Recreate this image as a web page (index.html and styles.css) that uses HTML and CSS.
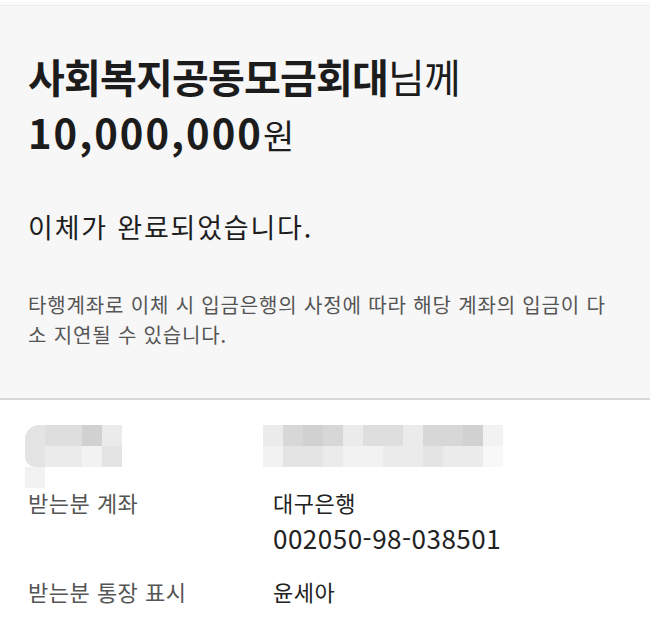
FILE: index.html
```html
<!DOCTYPE html>
<html lang="ko">
<head>
<meta charset="utf-8">
<title>이체 완료</title>
<link rel="stylesheet" href="styles.css">
</head>
<body>
<div class="screen">
  <div class="topbar"></div>
  <section class="summary">
    <h1 class="title">
      <span class="line"><b>사회복지공동모금회대</b>님께</span>
      <span class="line amount"><b class="num">10,000,000</b><span class="won">원</span></span>
    </h1>
    <p class="done">이체가 완료되었습니다.</p>
    <p class="notice">타행계좌로 이체 시 입금은행의 사정에 따라 해당 계좌의 입금이 다소 지연될 수 있습니다.</p>
  </section>
  <section class="details">
    <div class="row">
      <div class="mosaic mosaic-left">
        <i class="g2 rl"></i><i class="g3 w2"></i><i class="g5"></i><i class="g1"></i>
        <i class="g2 rl2"></i><i class="g1"></i><i class="g0"></i><i class="g2"></i><i class="g0"></i>
      </div>
      <div class="mosaic mosaic-right">
        <i class="g1"></i><i class="g4"></i><i class="g5"></i><i class="g4"></i><i class="g1"></i><i class="g3"></i><i class="g3"></i><i class="g1"></i><i class="g4"></i><i class="g4"></i><i class="g5"></i><i class="g0"></i>
        <i class="g0"></i><i class="g2"></i><i class="g2"></i><i class="g1"></i><i class="g0"></i><i class="g0"></i><i class="g1"></i><i class="g1"></i><i class="g2"></i><i class="g1"></i><i class="g1"></i><i class="gx"></i>
      </div>
    </div>
    <div class="row">
      <div class="label">받는분 계좌</div>
      <div class="value">
        <div>대구은행</div>
        <div class="acct">002050-98-038501</div>
      </div>
    </div>
    <div class="row">
      <div class="label">받는분 통장 표시</div>
      <div class="value">윤세아</div>
    </div>
  </section>
</div>
</body>
</html>
```

FILE: styles.css
```css
* { box-sizing: border-box; }

html, body {
  margin: 0;
  padding: 0;
  background: #ffffff;
}

body {
  font-family: "Noto Sans CJK KR", "Noto Sans", sans-serif;
  color: #222222;
}

.screen {
  width: 650px;
  height: 630px;
  overflow: hidden;
}

.topbar {
  height: 6px;
  background: #fbfbfb;
  border-top: 2px solid #ffffff;
  border-bottom: 1px solid #ececec;
}

.summary {
  background: #f7f7f7;
  padding: 42px 28px 0;
  height: 394px;
  border-bottom: 2px solid #d9d9d9;
}

.title {
  margin: 0;
  font-size: 40px;
  line-height: 56px;
  font-weight: 400;
  color: #1c1c1c;
}

.title .line {
  display: block;
  letter-spacing: -0.8px;
}

.title b {
  font-weight: 700;
}

.title .amount {
  letter-spacing: 0;
}

.title .num {
  letter-spacing: 2px;
}

.title .won {
  font-size: 34px;
}

.done {
  margin: 46px 0 0;
  font-size: 27px;
  line-height: 36px;
  letter-spacing: 1.8px;
  color: #1e1e1e;
}

.notice {
  margin: 45px 0 0;
  width: 588px;
  font-size: 20px;
  line-height: 30px;
  letter-spacing: 0.85px;
  word-break: break-all;
  color: #555555;
}

.details {
  padding: 25px 28px 0;
}

.row {
  display: grid;
  grid-template-columns: 245px 1fr;
  font-size: 22px;
  line-height: 36px;
  letter-spacing: 0.5px;
}

.row + .row {
  margin-top: 17px;
}

.label {
  color: #555555;
}

.value {
  color: #222222;
}

.acct {
  font-size: 26px;
  letter-spacing: 0.5px;
}

.mosaic {
  display: grid;
  grid-auto-rows: 21px;
  height: 42px;
}

.mosaic i {
  display: block;
}

.mosaic-left {
  width: 97px;
  margin-left: -3px;
  grid-template-columns: 20px 37px 20px 20px;
}

.mosaic-left .rl {
  border-top-left-radius: 14px;
}

.mosaic-left .rl2 {
  border-bottom-left-radius: 10px;
}

.mosaic-left i:nth-child(5) { grid-column: 1; }

.mosaic-right {
  width: 244px;
  grid-template-columns: repeat(12, 20px);
  margin-left: -10px;
}

.g0 { background: #f2f2f2; }
.g1 { background: #ebebeb; }
.g2 { background: #e4e4e4; }
.g3 { background: #dedede; }
.g4 { background: #d7d7d7; }
.g5 { background: #d1d1d1; }
.gx { background: #f8f8f8; }
```
